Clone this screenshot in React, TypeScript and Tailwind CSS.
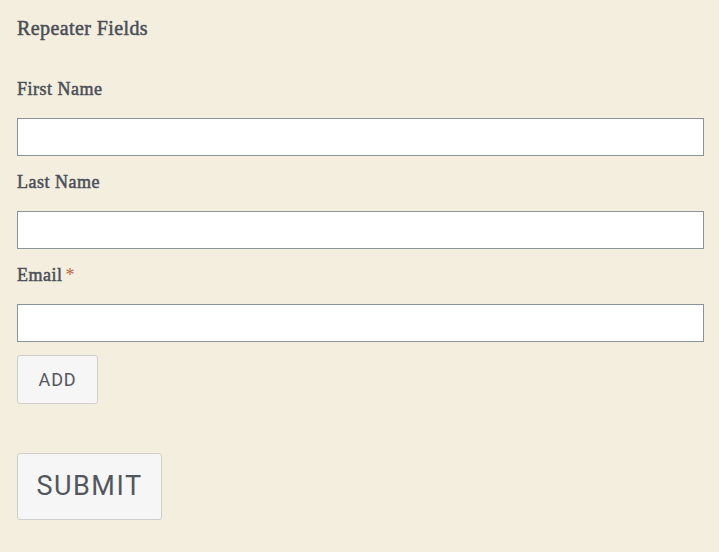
export default function App() {
  return (
    <div className="min-h-[552px] bg-[#f4eedf] px-[17px] pt-[16px] text-[#4a4f57] [-webkit-text-stroke:0.5px_#4a4f57]" style={{ fontFamily: '"Liberation Serif", "Times New Roman", serif' }}>
      {/* Header */}
      <h2 className="text-[20px] leading-[24px] tracking-[0.4px] font-normal">Repeater Fields</h2>

      <form className="mt-[37px] flex flex-col">
        <Field label="First Name" />
        <Field label="Last Name" className="mt-[14px]" />
        <Field label="Email" required className="mt-[14px]" />

        <div className="mt-[13px]">
          <button
            type="button"
            className="h-[49px] w-[81px] rounded-[3px] border border-[#cfcfcb] bg-[#f6f6f6] text-[18px] tracking-[0.8px] text-[#53575d] [-webkit-text-stroke:0px]"
            style={{ fontFamily: 'Roboto, "Liberation Sans", sans-serif' }}
          >
            ADD
          </button>
        </div>

        <div className="mt-[49px]">
          <button
            type="submit"
            className="h-[67px] w-[145px] rounded-[3px] border border-[#cfcfcb] bg-[#f6f6f6] text-[27px] tracking-[1.5px] text-[#53575d] [-webkit-text-stroke:0px]"
            style={{ fontFamily: 'Roboto, "Liberation Sans", sans-serif' }}
          >
            SUBMIT
          </button>
        </div>
      </form>
    </div>
  );
}

function Field({ label, required, className = '' }: { label: string; required?: boolean; className?: string }) {
  return (
    <div className={className}>
      <label className="block text-[18px] leading-[24px] tracking-[0.5px] font-normal">
        {label}
        {required && <span className="ml-[3px] text-[#c0683f] [-webkit-text-stroke:0px]">*</span>}
      </label>
      <input type="text" className="mt-[17px] block h-[38px] w-[687px] border border-[#8a939c] bg-white" />
    </div>
  );
}
